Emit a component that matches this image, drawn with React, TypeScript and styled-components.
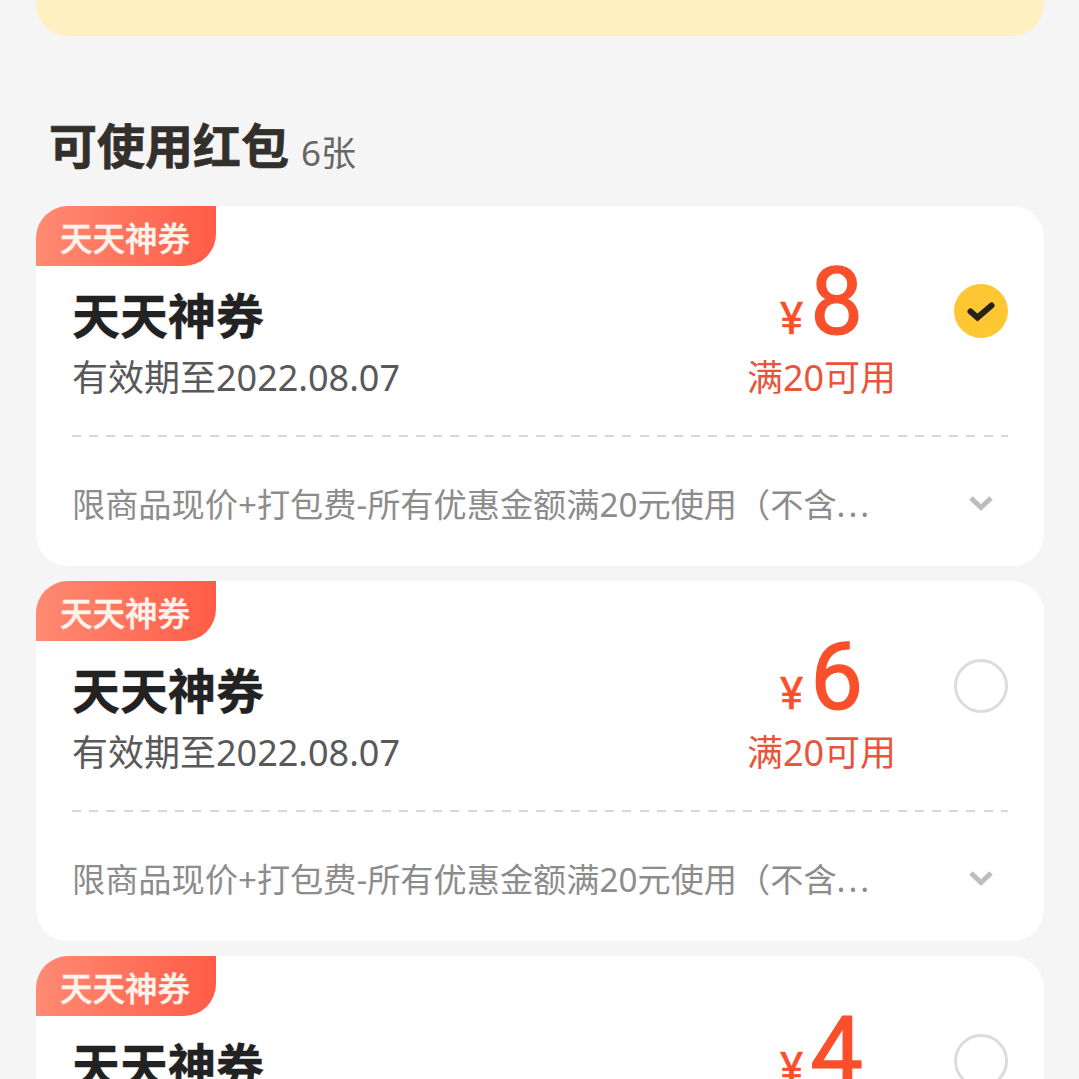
import styled, { createGlobalStyle } from "styled-components";

const coupons = [
  { amount: "8", selected: true },
  { amount: "6", selected: false },
  { amount: "4", selected: false },
];

const GlobalStyle = createGlobalStyle`
  html, body {
    margin: 0;
    padding: 0;
    background: #f5f5f5;
    overflow: hidden;
  }
  * {
    box-sizing: border-box;
  }
`;

export default function App() {
  return (
    <Page>
      <GlobalStyle />
      <Banner />
      <Heading>
        <HeadingTitle>可使用红包</HeadingTitle>
        <HeadingCount>6张</HeadingCount>
      </Heading>
      <CardList>
        {coupons.map((coupon) => (
          <Card key={coupon.amount}>
            <Tag>天天神券</Tag>
            <CardMain>
              <Info>
                <Title>天天神券</Title>
                <Expiry>有效期至2022.08.07</Expiry>
              </Info>
              <PriceBlock>
                <Price>
                  <Currency>¥</Currency>
                  <Amount>{coupon.amount}</Amount>
                </Price>
                <Limit>满20可用</Limit>
              </PriceBlock>
              <Radio $selected={coupon.selected}>
                {coupon.selected && (
                  <svg width="30" height="24" viewBox="0 0 30 24">
                    <path
                      d="M4.5 12.5 L11.5 18.5 L25.5 6.5"
                      fill="none"
                      stroke="#26221c"
                      strokeWidth="6"
                      strokeLinecap="round"
                      strokeLinejoin="miter"
                    />
                  </svg>
                )}
              </Radio>
            </CardMain>
            <Divider />
            <RuleRow>
              <RuleText>
                限商品现价+打包费-所有优惠金额满20元使用（不含<Dots>...</Dots>
              </RuleText>
              <Chevron width="26" height="18" viewBox="0 0 26 18">
                <path
                  d="M3 4 L13 13.5 L23 4"
                  fill="none"
                  stroke="#bdbdbd"
                  strokeWidth="5"
                />
              </Chevron>
            </RuleRow>
          </Card>
        ))}
      </CardList>
    </Page>
  );
}

const Page = styled.div`
  width: 1079px;
  height: 1079px;
  overflow: hidden;
  padding: 0 35px 0 36px;
  background: #f5f5f5;
  font-family: "Noto Sans CJK SC", "Noto Sans", sans-serif;
`;

const Banner = styled.div`
  height: 36px;
  background: #fff0c1;
  border-radius: 0 0 32px 32px;
`;

const Heading = styled.div`
  display: flex;
  align-items: flex-start;
  gap: 12px;
  height: 170px;
  padding: 74px 0 0 13px;
`;

const HeadingTitle = styled.div`
  font-size: 48px;
  line-height: 66px;
  font-weight: 700;
  color: #33302c;
  -webkit-text-stroke: 0.7px #33302c;
`;

const HeadingCount = styled.div`
  font-size: 35px;
  line-height: 50px;
  margin-top: 18px;
  color: #666666;
  font-family: "Noto Sans", "Noto Sans CJK SC", sans-serif;
`;

const CardList = styled.div`
  display: flex;
  flex-direction: column;
  gap: 15px;
`;

const Card = styled.div`
  position: relative;
  flex: none;
  height: 360px;
  background: #ffffff;
  border-radius: 32px;
  padding: 0 36px;
`;

const Tag = styled.div`
  position: absolute;
  top: 0;
  left: 0;
  width: 180px;
  height: 60px;
  padding-left: 24px;
  font-size: 32.5px;
  line-height: 62px;
  font-weight: 500;
  color: #fff3ec;
  -webkit-text-stroke: 0.5px #fff3ec;
  background: linear-gradient(90deg, #ff8a72, #ff5c47);
  border-radius: 32px 0 32px 0;
`;

const CardMain = styled.div`
  display: flex;
  align-items: flex-start;
  height: 229px;
`;

const Info = styled.div`
  width: 660px;
  padding-top: 74px;
`;

const Title = styled.div`
  font-size: 48px;
  line-height: 66px;
  font-weight: 700;
  color: #222222;
  -webkit-text-stroke: 0.4px #222222;
`;

const Expiry = styled.div`
  font-size: 36px;
  line-height: 50px;
  margin-top: 7px;
  color: #595959;
  font-family: "Noto Sans", "Noto Sans CJK SC", sans-serif;
`;

const PriceBlock = styled.div`
  width: 179px;
  padding-top: 46px;
  display: flex;
  flex-direction: column;
  align-items: center;
`;

const Price = styled.div`
  display: flex;
  align-items: baseline;
  height: 101px;
  gap: 7px;
  color: #f9502b;
`;

const Currency = styled.span`
  font-size: 44px;
  font-family: "Roboto", sans-serif;
  -webkit-text-stroke: 0.5px #f9502b;
`;

const Amount = styled.span`
  font-size: 94px;
  line-height: 100px;
  font-family: "Roboto", sans-serif;
  -webkit-text-stroke: 1.2px #f9502b;
`;

const Limit = styled.div`
  font-size: 36px;
  line-height: 50px;
  color: #e8553a;
  font-family: "Noto Sans", "Noto Sans CJK SC", sans-serif;
`;

const Radio = styled.div<{ $selected: boolean }>`
  flex: none;
  width: 54px;
  height: 54px;
  margin: 78px 0 0 auto;
  display: flex;
  align-items: center;
  justify-content: center;
  border-radius: 50%;
  background: ${(props) => (props.$selected ? "#fdc733" : "#ffffff")};
  border: ${(props) => (props.$selected ? "none" : "3px solid #dcdcdc")};
`;

const Divider = styled.div`
  height: 2px;
  background: repeating-linear-gradient(
    90deg,
    #d8d8d8 0 9px,
    transparent 9px 17.2px
  );
`;

const RuleRow = styled.div`
  display: flex;
  align-items: center;
  justify-content: space-between;
  height: 129px;
  padding: 0 14px 0 0;
`;

const RuleText = styled.div`
  font-size: 33.2px;
  line-height: 46px;
  padding-top: 6px;
  color: #8c8c8c;
  white-space: nowrap;
  font-family: "Noto Sans", "Noto Sans CJK SC", sans-serif;
`;

const Dots = styled.span`
  letter-spacing: 3px;
`;

const Chevron = styled.svg`
  margin-top: 2px;
`;
